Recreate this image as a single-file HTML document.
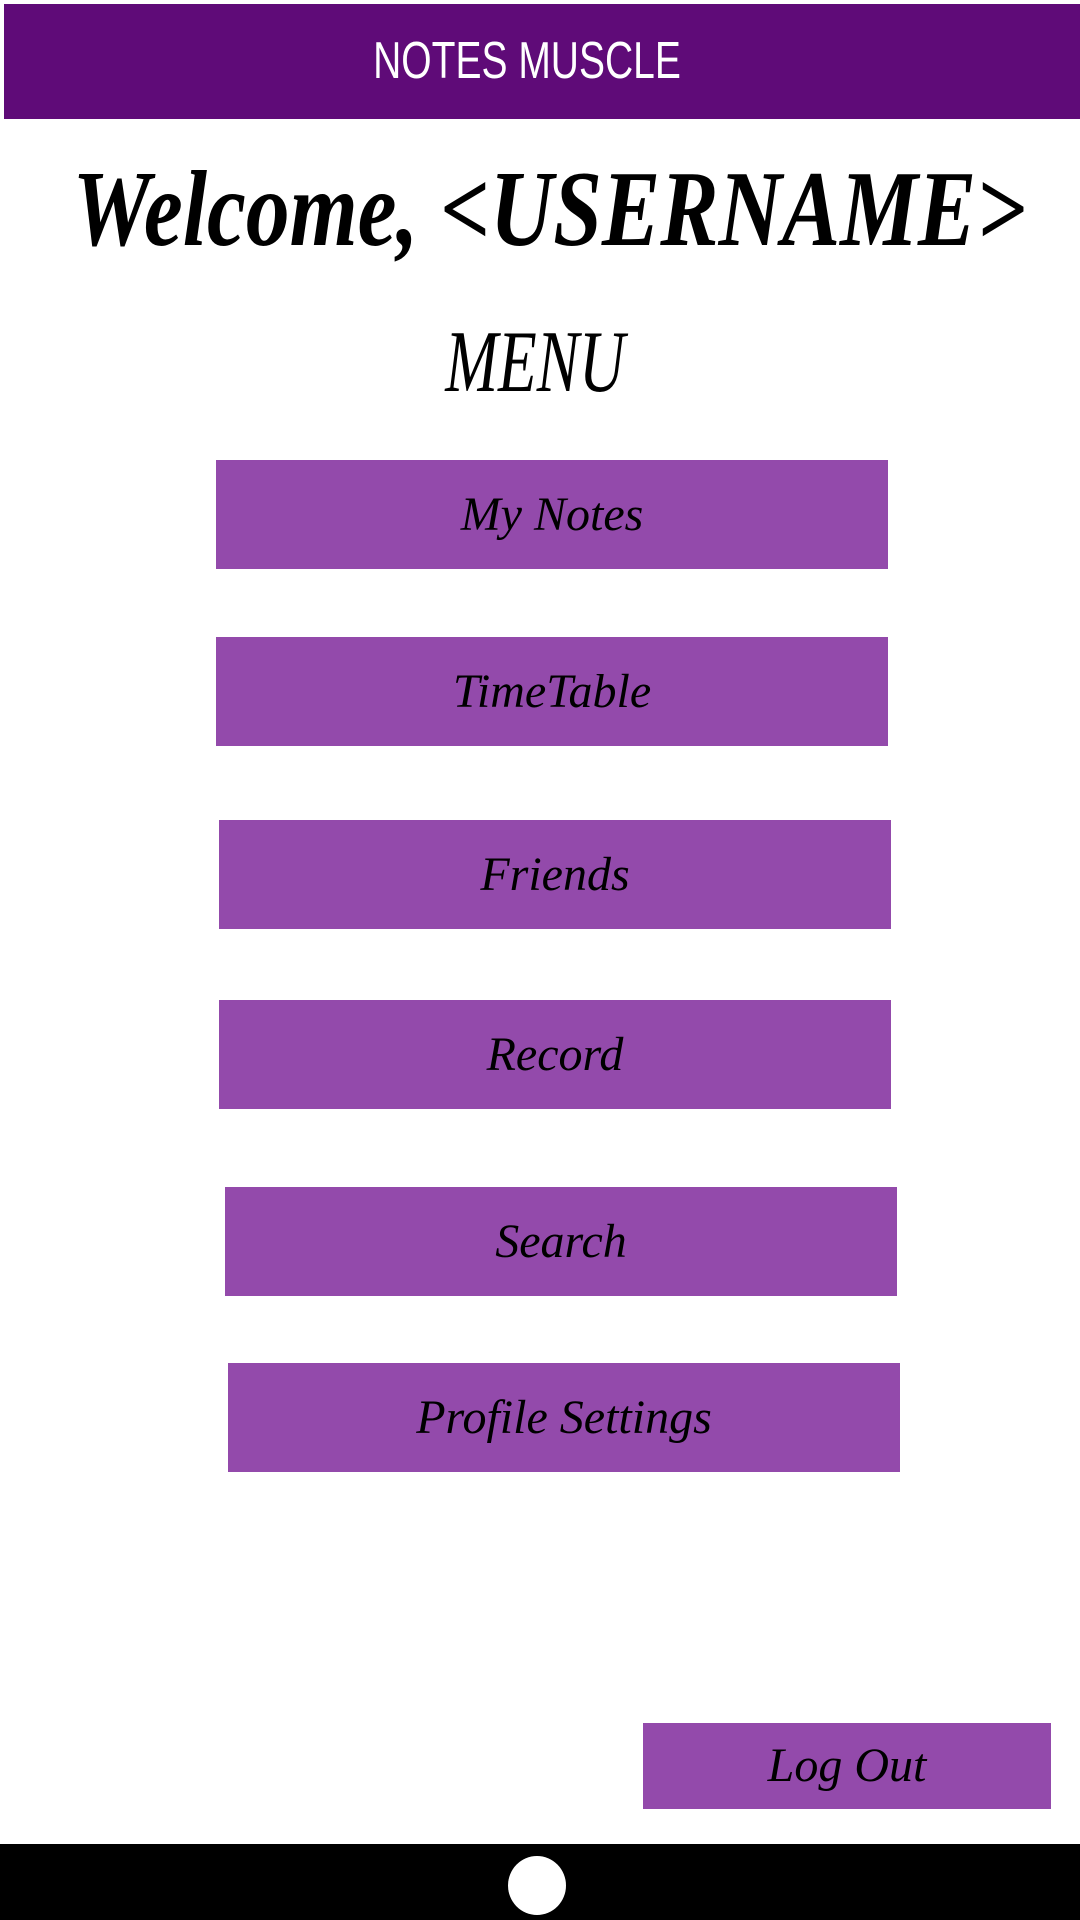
<!DOCTYPE html>
<html><head><meta charset="utf-8"><style>
body{margin:0;width:1080px;height:1920px;background:#fff;position:relative;overflow:hidden;font-family:"Liberation Serif",serif;}
.hdr{position:absolute;left:4px;top:4px;width:1076px;height:115px;background:#5f0b78;}
.hdr div{color:#fff;font-family:"Liberation Sans",sans-serif;font-size:52px;text-align:center;line-height:115px;transform:scaleX(0.75);margin-left:-30px;}
.t{position:absolute;left:0;width:1080px;text-align:center;color:#000;white-space:nowrap;}
.b{position:absolute;width:672px;height:109px;background:#934aab;color:#000;font-style:italic;font-size:48px;text-align:center;line-height:109px;}
</style></head><body>
<div class="hdr"><div>NOTES MUSCLE</div></div>
<div class="t" style="top:148px;font-size:108px;font-weight:bold;font-style:italic;left:-30px;transform:scaleX(0.81);">Welcome, &lt;USERNAME&gt;</div>
<div class="t" style="top:312px;font-size:88px;font-style:italic;left:-5px;transform:scaleX(0.72);">MENU</div>
<div class="b" style="left:216px;top:460px;">My Notes</div>
<div class="b" style="left:216px;top:637px;">TimeTable</div>
<div class="b" style="left:219px;top:820px;">Friends</div>
<div class="b" style="left:219px;top:1000px;">Record</div>
<div class="b" style="left:225px;top:1187px;">Search</div>
<div class="b" style="left:228px;top:1363px;">Profile Settings</div>
<div class="b" style="left:643px;top:1723px;width:408px;height:86px;line-height:86px;">Log Out</div>
<div style="position:absolute;left:0;top:1844px;width:1080px;height:76px;background:#000;"></div>
<div style="position:absolute;left:508px;top:1856px;width:58px;height:59px;border-radius:50%;background:#fff;"></div>
</body></html>
